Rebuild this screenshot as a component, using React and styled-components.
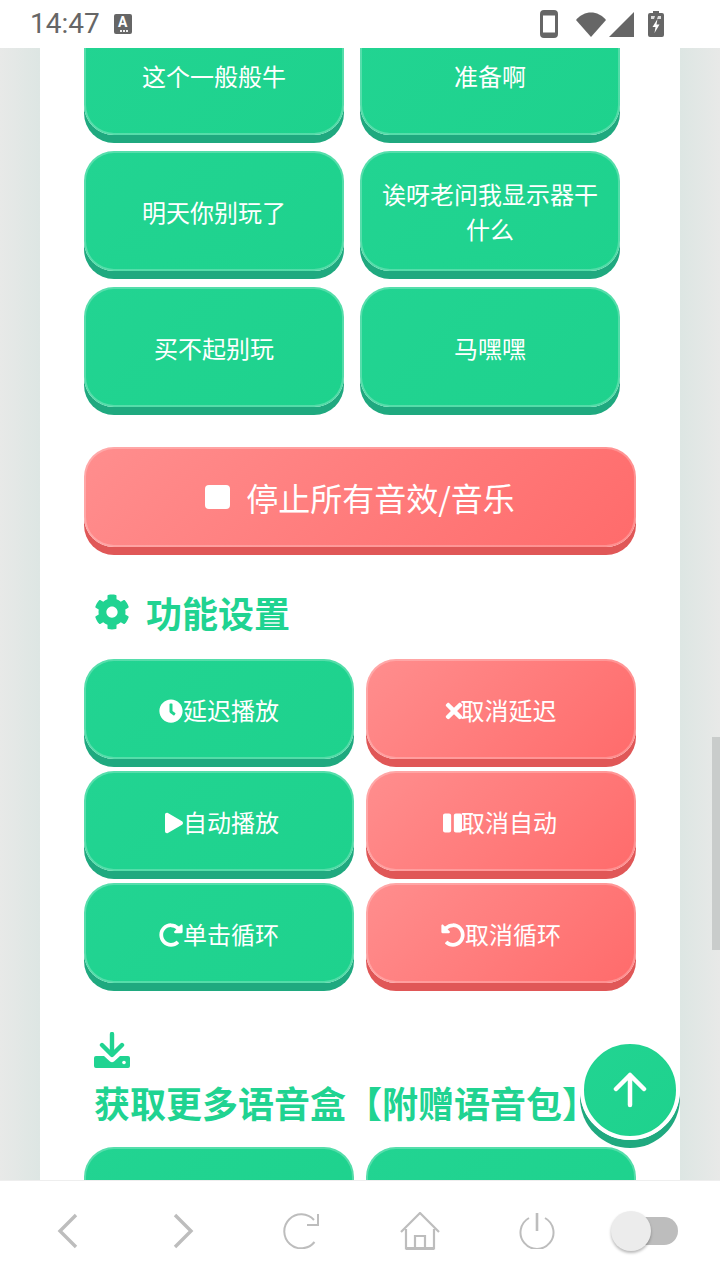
import React from "react";
import styled, { createGlobalStyle } from "styled-components";
import { FaCog, FaClock, FaPlay, FaTimes, FaPause, FaRedoAlt, FaUndoAlt } from "react-icons/fa";

const Global = createGlobalStyle`
  html, body { margin: 0; padding: 0; background: #fff; }
  * { box-sizing: border-box; }
  body { font-family: "Noto Sans CJK SC", Roboto, sans-serif; }
`;

const Phone = styled.div`
  width: 720px;
  height: 1280px;
  display: flex;
  flex-direction: column;
  overflow: hidden;
`;

const StatusBar = styled.header`
  height: 48px;
  flex: none;
  background: #fff;
  display: flex;
  align-items: center;
  padding: 0 56px 0 30px;
  color: #666;
`;

const Time = styled.span`
  font: 400 28px/32px Roboto, sans-serif;
`;

const ImeBadge = styled.span`
  position: relative;
  width: 18px;
  height: 20px;
  margin-left: 14px;
  background: #666;
  border-radius: 2px;
  color: #fff;
  font: 700 14px/17px Roboto, sans-serif;
  text-align: center;
  &::after {
    content: "";
    position: absolute;
    right: 7px;
    bottom: 2px;
    width: 2px;
    height: 2px;
    background: #eee;
    box-shadow: 3px 0 0 #eee, -3px 0 0 #eee;
  }
`;

const StatusIcons = styled.div`
  margin-left: auto;
  display: flex;
  align-items: center;
`;

const StatusSvg = styled.svg`
  display: block;
  margin-left: ${(p) => p.$gap}px;
`;

const Viewport = styled.main`
  position: relative;
  flex: 1;
  min-height: 0;
  overflow: hidden;
  background: linear-gradient(90deg, #e8e9e8 0, #dde6e3 40px, #dde6e3 680px, #e8e9e8 720px);
`;

const Card = styled.div`
  width: 640px;
  margin: -33px auto 0;
  padding: 0 44px;
  background: #fff;
`;

const SoundGrid = styled.div`
  display: grid;
  grid-template-columns: 260px 260px;
  gap: 16px;
`;

const FnGrid = styled.div`
  display: grid;
  grid-template-columns: 270px 270px;
  gap: 12px;
  margin-top: ${(p) => p.$top}px;
`;

const Btn = styled.button`
  height: ${(p) => p.$h}px;
  padding: 0 16px;
  border: 2px solid rgba(255, 255, 255, 0.24);
  border-radius: 30px;
  background: ${(p) =>
    p.$red
      ? "linear-gradient(135deg, #ff8e8e 0%, #ff6b6b 100%)"
      : "linear-gradient(135deg, #22d492 0%, #1ed28d 100%)"};
  background-origin: border-box;
  box-shadow: 0 8px 0 ${(p) => (p.$red ? "#e05757" : "#1fa97f")};
  color: #fff;
  font: 400 24px/35px "Noto Sans CJK SC", sans-serif;
  text-align: center;
  display: block;
  width: 100%;
  svg {
    font-size: 24px;
    vertical-align: -3px;
  }
`;

const StopBtn = styled(Btn)`
  height: 100px;
  margin-top: 40px;
  padding: 0 16px;
  font-size: 32px;
  line-height: 44px;
  display: flex;
  align-items: center;
  justify-content: center;
  gap: 16px;
`;

const FitIcon = styled.span`
  display: inline-block;
  width: ${(p) => p.$box}px;
  svg {
    width: ${(p) => p.$w}px;
    margin-left: ${(p) => p.$shift || 0}px;
  }
`;

const Heading = styled.h2`
  margin: 0;
  color: #20d391;
  font: 700 36px/54px "Noto Sans CJK SC", sans-serif;
  padding: 0 0 0 10px;
  display: ${(p) => (p.$stack ? "block" : "flex")};
  align-items: center;
  gap: 16px;
  margin-top: ${(p) => p.$top}px;
  svg {
    display: block;
    flex: none;
  }
`;

const StackIcon = styled.div`
  height: 36px;
  margin-bottom: 7px;
`;

const Scrollbar = styled.div`
  position: absolute;
  right: 0;
  top: 689px;
  width: 8px;
  height: 213px;
  background: #c9cccb;
`;

const TopBtn = styled.button`
  position: absolute;
  left: 580px;
  top: 992px;
  width: 100px;
  height: 100px;
  padding: 0;
  border-radius: 50%;
  border: 4px solid #fff;
  background: linear-gradient(135deg, #22d492 0%, #1ed28d 100%);
  box-shadow: 0 8px 0 #1fa97f;
  color: #fff;
  display: flex;
  align-items: center;
  justify-content: center;
`;

const NavBar = styled.nav`
  height: 100px;
  flex: none;
  position: relative;
  background: #fff;
  border-top: 1px solid #eeeeee;
  display: flex;
  align-items: center;
  padding: 0 42px 0 8px;
`;

const NavSlot = styled.div`
  width: 117.6px;
  display: flex;
  justify-content: center;
  svg {
    display: block;
  }
`;

const Toggle = styled.div`
  position: relative;
  margin-left: auto;
  width: 67px;
  height: 28px;
  display: flex;
  justify-content: flex-end;
`;

const Track = styled.div`
  width: 48px;
  height: 28px;
  border-radius: 14px;
  background: #bdbdbd;
`;

const Knob = styled.div`
  position: absolute;
  left: 0;
  top: -6px;
  width: 40px;
  height: 40px;
  border-radius: 50%;
  background: #ececec;
  box-shadow: 0 2px 3px rgba(0, 0, 0, 0.28);
`;

const sounds = ["这个一般般牛", "准备啊", "明天你别玩了", "诶呀老问我显示器干什么", "买不起别玩", "马嘿嘿"];

const Gray = "#bdbdbd";

export default function App() {
  return (
    <Phone>
      <Global />
      <StatusBar>
        <Time>14:47</Time>
        <ImeBadge>A</ImeBadge>
        <StatusIcons>
          <StatusSvg width="18" height="28" viewBox="0 0 18 28" $gap={0}>
            <rect x="1.5" y="1.5" width="15" height="25" rx="2.5" fill="none" stroke="#666" strokeWidth="3" />
            <rect x="1.5" y="1.5" width="15" height="4" fill="#666" />
            <rect x="1.5" y="22.5" width="15" height="4" fill="#666" />
          </StatusSvg>
          <StatusSvg width="30" height="25" viewBox="0 0 30 25" $gap={18}>
            <path d="M0 8 C8 -2 22 -2 30 8 L15 25 Z" fill="#666" />
          </StatusSvg>
          <StatusSvg width="25" height="25" viewBox="0 0 25 25" $gap={3}>
            <path d="M0 25 L25 0 V25 Z" fill="#666" />
          </StatusSvg>
          <StatusSvg width="16" height="26" viewBox="0 0 16 26" $gap={14}>
            <path d="M5 0 H11 V2 H14 Q16 2 16 4 V24 Q16 26 14 26 H2 Q0 26 0 24 V4 Q0 2 2 2 H5 Z" fill="#666" />
            <path d="M3 5 H7 L6 8 H3 Z M10 5 H13 V8 H9 Z" fill="#ddd" />
            <path d="M9.5 8 L4.5 16 H7.5 L6.5 22 L11.5 13.5 H8.5 Z" fill="#fff" />
          </StatusSvg>
        </StatusIcons>
      </StatusBar>

      <Viewport>
        <Card>
          <SoundGrid>
            {sounds.map((s) => (
              <Btn key={s} $h={120}>{s}</Btn>
            ))}
          </SoundGrid>

          <StopBtn $red $h={100}>
            <svg width="25" height="24" viewBox="0 0 25 24">
              <rect width="25" height="24" rx="4" fill="#fff" />
            </svg>
            停止所有音效/音乐
          </StopBtn>

          <Heading $top={38}>
            <FaCog size={36} />
            功能设置
          </Heading>

          <FnGrid $top={20}>
            <Btn $h={100}><FaClock />延迟播放</Btn>
            <Btn $h={100} $red><FitIcon $box={15} $w={18} $shift={-1}><FaTimes /></FitIcon>取消延迟</Btn>
            <Btn $h={100}><FitIcon $box={24} $w={18} $shift={6}><FaPlay /></FitIcon>自动播放</Btn>
            <Btn $h={100} $red><FitIcon $box={16} $w={19} $shift={-2}><FaPause /></FitIcon>取消自动</Btn>
            <Btn $h={100}><FaRedoAlt />单击循环</Btn>
            <Btn $h={100} $red><FaUndoAlt />取消循环</Btn>
          </FnGrid>

          <Heading $top={49} $stack>
            <StackIcon>
              <svg width="36" height="36" viewBox="0 0 36 36">
                <path d="M18 2 V20 M8 13 L18 23 L28 13" fill="none" stroke="#20d391" strokeWidth="4.4" strokeLinecap="round" strokeLinejoin="round" />
                <path d="M2 24 H10 L16 29.5 Q18 31 20 29.5 L26 24 H34 Q36 24 36 26 V34 Q36 36 34 36 H2 Q0 36 0 34 V26 Q0 24 2 24 Z" fill="#20d391" />
                <circle cx="30" cy="30.5" r="1.8" fill="#fff" />
              </svg>
            </StackIcon>
            获取更多语音盒【附赠语音包】
          </Heading>

          <FnGrid $top={18}>
            <Btn $h={100} />
            <Btn $h={100} />
          </FnGrid>
        </Card>
        <Scrollbar />
        <TopBtn aria-label="top">
          <svg width="36" height="36" viewBox="0 0 36 36" fill="none" stroke="#fff" strokeWidth="4.5" strokeLinecap="round" strokeLinejoin="round">
            <path d="M18 33 V3 M4 17 L18 3 L32 17" />
          </svg>
        </TopBtn>
      </Viewport>

      <NavBar>
        <NavSlot>
          <svg width="24" height="36" viewBox="0 0 24 36" fill="none" stroke={Gray} strokeWidth="3.4">
            <path d="M21 2 L5 18 L21 34" />
          </svg>
        </NavSlot>
        <NavSlot>
          <svg width="24" height="36" viewBox="0 0 24 36" fill="none" stroke={Gray} strokeWidth="3.4">
            <path d="M3 2 L19 18 L3 34" />
          </svg>
        </NavSlot>
        <NavSlot>
          <svg width="37" height="36" viewBox="0 0 37 36" fill="none" stroke={Gray} strokeWidth="2">
            <path d="M31 7 A17 17 0 1 0 31.5 29" />
            <path d="M35 1 V12 H24" />
          </svg>
        </NavSlot>
        <NavSlot>
          <svg width="40" height="38" viewBox="0 0 40 38" fill="none" stroke={Gray} strokeWidth="2.2">
            <path d="M1 20 L20 1 L39 20" />
            <path d="M6 17 V36.5 H34 V17" />
            <path d="M15 36 V24 H25 V36" />
            <path d="M6 36.5 H34" strokeWidth="3" />
          </svg>
        </NavSlot>
        <NavSlot>
          <svg width="36" height="36" viewBox="0 0 36 36" fill="none" stroke={Gray} strokeWidth="2">
            <path d="M10 5 A16.5 16.5 0 1 0 26 5" />
            <path d="M18 0 V18" strokeWidth="2.6" />
          </svg>
        </NavSlot>
        <Toggle>
          <Track />
          <Knob />
        </Toggle>
      </NavBar>
    </Phone>
  );
}
